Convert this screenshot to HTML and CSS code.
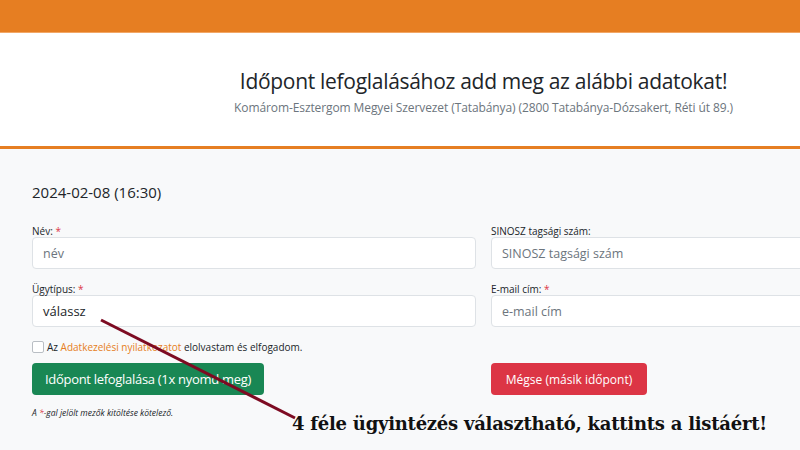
FILE: index.html
```html
<!DOCTYPE html>
<html lang="hu">
<head>
  <meta charset="UTF-8" />
  <meta name="viewport" content="width=device-width, initial-scale=1.0" />
  <title>Időpontfoglalás</title>
  <link rel="stylesheet" href="styles.css">
</head>
<body>
  <div class="topbar"></div>

  <header class="page-head">
    <h1>Időpont lefoglalásához add meg az alábbi adatokat!</h1>
    <p class="place">Komárom-Esztergom Megyei Szervezet (Tatabánya) (2800 Tatabánya-Dózsakert, Réti út 89.)</p>
  </header>

  <main class="booking">
    <h2 class="slot">2024-02-08 (16:30)</h2>

    <form class="form-grid">
      <div class="field">
        <label for="nev">Név: <span class="req">*</span></label>
        <input id="nev" type="text" placeholder="név">
      </div>
      <div class="field">
        <label for="sinosz">SINOSZ tagsági szám:</label>
        <input id="sinosz" type="text" placeholder="SINOSZ tagsági szám">
      </div>
      <div class="field">
        <label for="tipus">Ügytípus: <span class="req">*</span></label>
        <div class="select-box" id="tipus">válassz</div>
      </div>
      <div class="field">
        <label for="email">E-mail cím: <span class="req">*</span></label>
        <input id="email" type="email" placeholder="e-mail cím">
      </div>

      <div class="field">
        <div class="check">
          <span class="box"></span>
          <span>Az <a href="#">Adatkezelési nyilatkozatot</a> elolvastam és elfogadom.</span>
        </div>
        <button type="button" class="btn btn-green">Időpont lefoglalása (1x nyomd meg)</button>
        <p class="note">A <span class="req">*</span>-gal jelölt mezők kitöltése kötelező.</p>
      </div>
      <div class="field buttons-right">
        <button type="button" class="btn btn-red">Mégse (másik időpont)</button>
      </div>
    </form>
  </main>

  <!-- hint arrow over the form -->
  <svg class="hint-line" width="800" height="450" viewBox="0 0 800 450">
    <line x1="101" y1="320" x2="295" y2="418" stroke="#7d0b22" stroke-width="3" />
  </svg>
  <div class="hint-text">4 féle ügyintézés választható, kattints a listáért!</div>
</body>
</html>
```

FILE: styles.css
```css
html {
  overflow: hidden;
}
body {
  margin: 0;
  width: 967px;
  min-height: 450px;
  font-family: "Open Sans", "Noto Sans", sans-serif;
  background: #f8f9fa;
  color: #212529;
  position: relative;
}
.topbar {
  height: 32px;
  background: #e67e22;
  border-bottom: 1px solid #f2a766;
}
.page-head {
  background: white;
  text-align: center;
  height: 116px;
  box-sizing: border-box;
  padding-top: 33px;
  border-bottom: 3px solid #e67e22;
}
.page-head h1 {
  margin: 0;
  font-weight: 400;
  font-size: 21px;
  line-height: 30px;
  letter-spacing: -0.3px;
}
.place {
  margin: 3px 0 0;
  font-size: 12px;
  color: #6c757d;
  letter-spacing: -0.1px;
}
.booking {
  padding: 32px 32px 0;
}
.slot {
  margin: 0 0 22px;
  font-size: 15px;
  font-weight: 400;
  line-height: 22px;
}
.form-grid {
  display: grid;
  grid-template-columns: 444px 444px;
  column-gap: 15px;
  row-gap: 14px;
}
.field label {
  display: block;
  font-size: 10px;
  line-height: 12px;
}
.req {
  color: #dc3545;
}
.field input,
.select-box {
  display: block;
  box-sizing: border-box;
  width: 100%;
  height: 32px;
  padding: 0 10px;
  font: inherit;
  font-size: 12.5px;
  line-height: 30px;
  border: 1px solid #dee2e6;
  border-radius: 4px;
  background: white;
  color: #212529;
}
.select-box {
  font-size: 13px;
}
.field input::placeholder {
  color: #6c757d;
}
.check {
  display: flex;
  align-items: center;
  gap: 3px;
  font-size: 10px;
  height: 11px;
}
.check .box {
  width: 10px;
  height: 10px;
  border: 1px solid #b9bec4;
  border-radius: 2px;
  background: white;
}
.check a {
  color: #e67e22;
  text-decoration: none;
}
.btn {
  display: inline-block;
  height: 32px;
  border: none;
  border-radius: 4px;
  color: white;
  font-family: inherit;
  white-space: nowrap;
  cursor: pointer;
}
.btn-green {
  margin-top: 11px;
  width: 232px;
  background: #198754;
  font-size: 13px;
  letter-spacing: -0.3px;
}
.btn-red {
  width: 156px;
  background: #dc3545;
  font-size: 12px;
}
.buttons-right {
  padding-top: 22px;
}
.note {
  margin: 12px 0 0;
  font-size: 8.5px;
  font-style: italic;
}
.hint-line {
  position: absolute;
  left: 0;
  top: 0;
  pointer-events: none;
}
.hint-text {
  position: absolute;
  left: 292px;
  top: 413px;
  font-family: "DejaVu Serif", serif;
  font-weight: bold;
  font-size: 18px;
  letter-spacing: -0.25px;
  color: #111;
}
```
